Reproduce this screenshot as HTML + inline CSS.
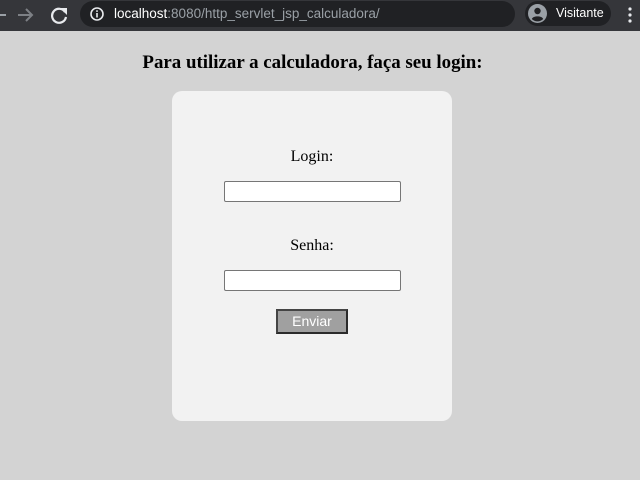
<!DOCTYPE html>
<html><head><meta charset="utf-8"><style>
*{margin:0;padding:0;box-sizing:border-box}
body{width:640px;height:480px;background:#d3d3d3;position:relative;overflow:hidden;font-family:"Liberation Serif",serif}
#bar{position:absolute;left:0;top:0;width:640px;height:31px;background:#35363a}
#url{position:absolute;left:80px;top:1px;width:435px;height:26px;border-radius:13px;background:#202124;font-family:"Liberation Sans",sans-serif;font-size:13.5px;color:#9aa0a6;line-height:26px;padding-left:34px}
#url b{font-weight:normal;color:#fff}
#prof{position:absolute;left:525px;top:1px;width:86px;height:25px;border-radius:13px;background:#202124;font-family:"Liberation Sans",sans-serif;font-size:12.5px;color:#fff;line-height:25px;padding-left:31px}
h3{position:absolute;top:52px;left:0;width:625px;text-align:center;font-size:18.9px;font-weight:bold;color:#000}
#card{position:absolute;left:172px;top:91px;width:280px;height:330px;background:#f2f2f2;border-radius:10px}
.lbl{position:absolute;left:0;width:280px;text-align:center;font-size:16px;color:#000}
.in{position:absolute;left:52px;width:177px;height:21px;background:#fff;border:1px solid #767676;border-radius:2px}
#btn{position:absolute;left:104px;top:218px;width:72px;height:25px;background:#a0a0a0;border:2px solid #2b2b2b;border-top-color:#444;border-left-color:#444;color:#fff;font-family:"Liberation Sans",sans-serif;font-size:14px;text-align:center;line-height:21px}
</style></head><body>
<div id="bar">
<svg style="position:absolute;left:0;top:6px" width="70" height="18" viewBox="0 0 70 18">
<path d="M-4 9H6" stroke="#9aa0a6" stroke-width="2" fill="none"/>
<path d="M18 9H32M26 3L32 9L26 15" stroke="#7d8085" stroke-width="2" fill="none"/>
<path d="M65 6A7 7 0 1 0 66 11" stroke="#e8eaed" stroke-width="2.2" fill="none"/><path d="M60 2H67V9Z" fill="#e8eaed"/>
</svg>
<div id="url"><svg style="position:absolute;left:10px;top:6px" width="14" height="14" viewBox="0 0 14 14"><circle cx="7" cy="7" r="6" stroke="#e8eaed" stroke-width="1.6" fill="none"/><rect x="6.2" y="6" width="1.6" height="4.5" fill="#e8eaed"/><rect x="6.2" y="3.3" width="1.6" height="1.6" fill="#e8eaed"/></svg><b>localhost</b>:8080/http_servlet_jsp_calculadora/</div>
<div id="prof"><svg style="position:absolute;left:3px;top:3px" width="19" height="19" viewBox="0 0 19 19"><circle cx="9.5" cy="9.5" r="9.5" fill="#9aa0a6"/><circle cx="9.5" cy="7" r="3.2" fill="#202124"/><path d="M3.8 15C5 11.5 14 11.5 15.2 15A8 8 0 0 1 3.8 15Z" fill="#202124"/></svg>Visitante</div>
<svg style="position:absolute;left:627px;top:6px" width="6" height="18"><circle cx="3" cy="3" r="1.6" fill="#e8eaed"/><circle cx="3" cy="9" r="1.6" fill="#e8eaed"/><circle cx="3" cy="15" r="1.6" fill="#e8eaed"/></svg>
</div>
<h3>Para utilizar a calculadora, faça seu login:</h3>
<div id="card">
<div class="lbl" style="top:57px">Login:</div>
<div class="in" style="top:90px"></div>
<div class="lbl" style="top:146px">Senha:</div>
<div class="in" style="top:179px"></div>
<div id="btn">Enviar</div>
</div>
</body></html>
